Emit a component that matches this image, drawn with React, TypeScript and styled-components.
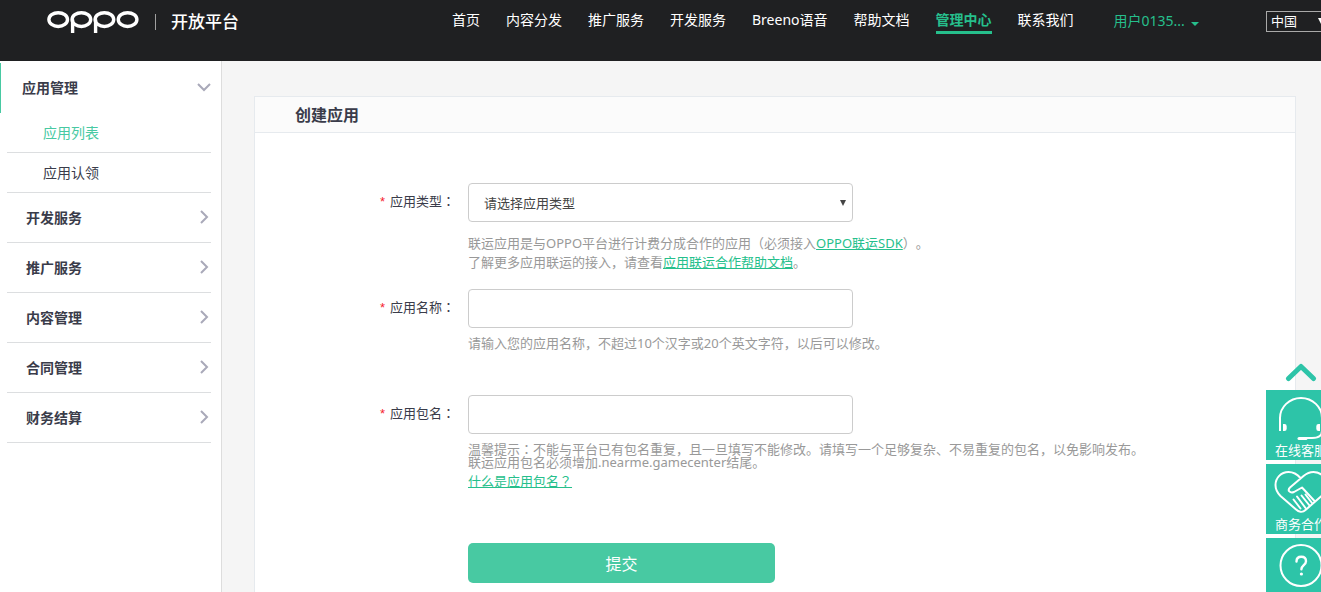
import React, { useState } from "react";
import styled, { createGlobalStyle, css } from "styled-components";

const color = {
  header: "#1f2022",
  accent: "#26bf8c",
  brand: "#48c9a2",
  widget: "#2dc4a8",
  ink: "#3a3c4a",
  muted: "#999999",
  rule: "#dcdee0",
  frame: "#e6eaee",
};

const GlobalStyle = createGlobalStyle`
  *, *::before, *::after { box-sizing: border-box; }
  body {
    margin: 0;
    font-family: "Noto Sans", "Noto Sans CJK SC", sans-serif;
    font-size: 13px;
    color: ${color.ink};
    background: #f5f5f5;
    text-spacing-trim: space-all;
  }
  a { color: inherit; text-decoration: none; }
  button, input, select { font: inherit; color: inherit; margin: 0; }
`;

const Shell = styled.div`
  overflow: hidden;
`;

const Page = styled.div`
  position: relative;
  display: flex;
  flex-direction: column;
  min-width: 1336px;
  min-height: 100vh;
`;

/* Full-width punctuation drawn in the middle of its cell */
const Mark = styled.span`
  font-family: "Noto Sans CJK JP", sans-serif;
  line-height: 0;
`;

/* ---------- header ---------- */

const Header = styled.header`
  display: flex;
  align-items: flex-start;
  height: 61px;
  padding: 0 8px 0 47px;
  background: ${color.header};
  color: #fff;
`;

const Brand = styled.a`
  display: flex;
  align-items: center;
  flex: none;
  width: 405px;
  height: 44px;
`;

const LogoMark = styled.svg`
  display: block;
  width: 92px;
  height: 24px;
`;

const BrandDivider = styled.span`
  width: 1px;
  height: 16px;
  margin: 0 15px 0 16px;
  background: #a0a0a0;
`;

const BrandName = styled.span`
  font-size: 17px;
  font-weight: 500;
  line-height: 24px;
`;

const Nav = styled.nav`
  display: flex;
  gap: 26px;
  padding-top: 9px;
`;

const NavLink = styled.a<{ $active?: boolean }>`
  border-bottom: 3px solid transparent;
  font-size: 14px;
  line-height: 22px;
  white-space: nowrap;
  ${(p) =>
    p.$active &&
    css`
      color: ${color.accent};
      border-color: ${color.accent};
      font-weight: 700;
    `}
`;

const UserMenu = styled.button`
  display: flex;
  align-items: center;
  gap: 6px;
  margin: 9px 0 0 40px;
  padding: 0;
  border: 0;
  background: none;
  color: ${color.accent};
  font-size: 14px;
  line-height: 24px;
  white-space: nowrap;
`;

const Caret = styled.span`
  margin-top: 5px;
  border: 4px solid transparent;
  border-top-color: currentColor;
  border-bottom: 0;
`;

const CountryBox = styled.div`
  display: grid;
  align-items: center;
  flex: none;
  width: 62px;
  height: 21px;
  margin: 11px 0 0 auto;
`;

const CountrySelect = styled.select`
  grid-area: 1 / 1;
  width: 100%;
  height: 21px;
  padding: 0 4px;
  border: 1px solid #a9a9a9;
  border-radius: 0;
  background: ${color.header};
  color: #fff;
  line-height: 19px;
  appearance: none;
`;

const DownMark = styled.span<{ $inset: number; $size: number }>`
  grid-area: 1 / 1;
  justify-self: end;
  margin-right: ${(p) => p.$inset}px;
  border: ${(p) => p.$size}px solid transparent;
  border-top: ${(p) => p.$size * 2}px solid currentColor;
  border-bottom: 0;
  pointer-events: none;
`;

/* ---------- sidebar ---------- */

const Body = styled.div`
  display: flex;
  flex: 1;
`;

const Sidebar = styled.aside`
  flex: none;
  width: 222px;
  padding-top: 2px;
  border-right: 1px solid #dddddd;
  background: #fff;
`;

const Group = styled.a<{ $open?: boolean }>`
  display: flex;
  align-items: center;
  justify-content: space-between;
  height: 50px;
  font-size: 14px;
  font-weight: 700;
  ${(p) =>
    p.$open
      ? css`
          padding: 0 10px 2px 21px;
          border-left: 1px solid ${color.brand};
        `
      : css`
          margin: 0 10px 0 7px;
          padding: 0 0 2px 19px;
          border-bottom: 1px solid ${color.rule};
        `}
`;

const SubItem = styled.a<{ $active?: boolean }>`
  display: block;
  height: 40px;
  margin: 0 10px 0 7px;
  padding-left: 36px;
  border-bottom: 1px solid ${color.rule};
  color: ${(p) => (p.$active ? color.brand : color.ink)};
  font-size: 14px;
  line-height: 39px;
`;

const Chevron = styled.svg`
  width: 14px;
  height: 14px;
  fill: none;
  stroke: #a9a9b9;
  stroke-width: 2;
`;

/* ---------- form card ---------- */

const Main = styled.main`
  display: flex;
  flex: 1;
  min-width: 0;
  padding: 35px 40px 0 32px;
  background: #f5f5f5;
`;

const Card = styled.section`
  flex: 1;
  min-width: 0;
  border: 1px solid ${color.frame};
  border-bottom: 0;
  background: #fff;
`;

const CardTitle = styled.h1`
  height: 36px;
  margin: 0;
  padding-left: 40px;
  border-bottom: 1px solid ${color.frame};
  background: #fbfbfb;
  font-size: 16px;
  font-weight: 700;
  line-height: 36px;
`;

const Form = styled.form`
  padding: 50px 0 9px;
`;

const Row = styled.div<{ $height: number }>`
  display: grid;
  grid-template-columns: 200px 1fr;
  column-gap: 13px;
  align-items: start;
  min-height: ${(p) => p.$height}px;
`;

const Label = styled.label`
  text-align: right;
  line-height: 36px;
`;

const Star = styled.span`
  margin-right: 5px;
  color: #f5222d;
  font-family: "Liberation Sans", sans-serif;
`;

const control = css`
  display: block;
  width: 385px;
  height: 39px;
  padding: 0 15px;
  border: 1px solid #cccccc;
  border-radius: 4px;
  background: #fff;
`;

const TextInput = styled.input`
  ${control}
`;

const SelectBox = styled.div`
  display: grid;
  align-items: center;
  width: 385px;
  color: #444;
`;

const Select = styled.select`
  ${control}
  grid-area: 1 / 1;
  appearance: none;
`;

const Hint = styled.p<{ $top: number; $line: number }>`
  margin: ${(p) => p.$top}px 0 0;
  color: ${color.muted};
  line-height: ${(p) => p.$line}px;
`;

const HintLink = styled.a`
  color: ${color.accent};
  text-decoration: underline;
`;

const Submit = styled.button`
  display: block;
  width: 307px;
  height: 40px;
  margin-left: 213px;
  padding: 0;
  border: 0;
  border-radius: 5px;
  background: ${color.brand};
  color: #fff;
  font-size: 16px;
`;

/* ---------- floating help ---------- */

const Floating = styled.div`
  position: absolute;
  top: 361px;
  right: 0;
  display: flex;
  flex-direction: column;
  gap: 4px;
  width: 70px;
`;

const ToTop = styled.button`
  display: flex;
  justify-content: center;
  height: 25px;
  padding: 0;
  border: 0;
  background: none;
`;

const Widget = styled.a`
  display: flex;
  flex-direction: column;
  align-items: center;
  height: 70px;
  background: ${color.widget};
  color: #fff;
  line-height: 20px;
`;

const WidgetIcon = styled.svg`
  flex: none;
  width: 70px;
  height: 50px;
  fill: none;
  stroke: #fff;
  stroke-width: 2;
  stroke-linecap: round;
  stroke-linejoin: round;
`;

const navItems = ["首页", "内容分发", "推广服务", "开发服务", "Breeno语音", "帮助文档", "管理中心", "联系我们"];
const groups = ["开发服务", "推广服务", "内容管理", "合同管理", "财务结算"];

function Logo() {
  return (
    <LogoMark viewBox="0 0 92 24" role="img" aria-label="OPPO">
      <g fill="none" stroke="#fff" strokeWidth="3.4">
        <ellipse cx="11.2" cy="9.6" rx="9.3" ry="6.9" />
        <ellipse cx="34.4" cy="9.6" rx="9.3" ry="6.9" />
        <ellipse cx="57.4" cy="9.6" rx="9.3" ry="6.9" />
        <ellipse cx="80.6" cy="9.6" rx="9.3" ry="6.9" />
        <path d="M25.6 9.6V23M48.6 9.6V23" />
      </g>
    </LogoMark>
  );
}

function HeadsetIcon() {
  return (
    <WidgetIcon viewBox="0 0 70 50" aria-hidden="true">
      <path strokeLinecap="butt" d="M14 41V28a21 20 0 0 1 42 0v13" />
      <path d="M56 41c0 5-4 7-10 7h-6" />
      <path strokeWidth="3" d="M33 48.4h7" />
      <path fill="#fff" stroke="none" d="M17 34h1.500a2.200 2.200 0 0 1 2.200 2.200v2.600a2.200 2.200 0 0 1-2.200 2.200H17zM54 34h-1.500a2.200 2.200 0 0 0-2.200 2.200v2.600a2.200 2.200 0 0 0 2.200 2.200H54z" />
    </WidgetIcon>
  );
}

function PartnerIcon() {
  return (
    <WidgetIcon viewBox="0 0 70 50" aria-hidden="true">
      <path d="M34.500 14C31 10 27 8 22.500 8C15 8 9.500 14 9.500 21c0 5 2 8 5 11l15 13c3 3 7 4 10 1l16-14c3-3 5-6 5-11C60.500 14 55 8 47.500 8c-4 0-7 1.500-10 4L24 23.500c-3 3 0 6 4 4.500l8-4.500 12.500 13.500" />
      <path d="M27.500 35.500l7 9M31 32.500l8.500 11.500M35.500 31.500l8 10M39.500 30.500l6.500 8.500" />
    </WidgetIcon>
  );
}

function QuestionIcon() {
  return (
    <WidgetIcon viewBox="0 0 70 50" aria-hidden="true">
      <circle cx="35" cy="27.500" r="20.500" />
      <path strokeWidth="2.400" d="M30.500 23.500c0-3 2-4.700 4.800-4.700s4.700 1.700 4.700 4.400c0 3.800-4.600 4-4.600 8" />
      <circle cx="35.400" cy="36" r="1.600" fill="#fff" stroke="none" />
    </WidgetIcon>
  );
}

function Required({ htmlFor, children }: { htmlFor: string; children: React.ReactNode }) {
  return (
    <Label htmlFor={htmlFor}>
      <Star>*</Star>
      {children}
      <Mark>：</Mark>
    </Label>
  );
}

export default function App() {
  const [name, setName] = useState("");
  const [pkg, setPkg] = useState("");

  return (
    <Shell>
      <GlobalStyle />
      <Page>
        <Header>
          <Brand href="#">
            <Logo />
            <BrandDivider />
            <BrandName>开放平台</BrandName>
          </Brand>
          <Nav>
            {navItems.map((item) => (
              <NavLink key={item} href="#" $active={item === "管理中心"}>
                {item}
              </NavLink>
            ))}
          </Nav>
          <UserMenu type="button">
            用户0135...
            <Caret />
          </UserMenu>
          <CountryBox>
            <CountrySelect aria-label="国家">
              <option>中国</option>
            </CountrySelect>
            <DownMark $inset={2} $size={4} />
          </CountryBox>
        </Header>

        <Body>
          <Sidebar>
            <Group href="#" $open>
              应用管理
              <Chevron viewBox="0 0 14 14">
                <path d="M1 4l6 6 6-6" />
              </Chevron>
            </Group>
            <SubItem href="#" $active>
              应用列表
            </SubItem>
            <SubItem href="#">应用认领</SubItem>
            {groups.map((g) => (
              <Group key={g} href="#">
                {g}
                <Chevron viewBox="0 0 14 14">
                  <path d="M4 1l6 6-6 6" />
                </Chevron>
              </Group>
            ))}
          </Sidebar>

          <Main>
            <Card>
              <CardTitle>创建应用</CardTitle>
              <Form onSubmit={(e) => e.preventDefault()}>
                <Row $height={106}>
                  <Required htmlFor="app-type">应用类型</Required>
                  <div>
                    <SelectBox>
                      <Select id="app-type">
                        <option>请选择应用类型</option>
                      </Select>
                      <DownMark $inset={7} $size={3} />
                    </SelectBox>
                    <Hint $top={12} $line={19}>
                      联运应用是与OPPO平台进行计费分成合作的应用（必须接入<HintLink href="#">OPPO联运SDK</HintLink>）。
                      <br />
                      了解更多应用联运的接入，请查看<HintLink href="#">应用联运合作帮助文档</HintLink>。
                    </Hint>
                  </div>
                </Row>
                <Row $height={106}>
                  <Required htmlFor="app-name">应用名称</Required>
                  <div>
                    <TextInput id="app-name" value={name} onChange={(e) => setName(e.target.value)} />
                    <Hint $top={6} $line={19}>
                      请输入您的应用名称，不超过10个汉字或20个英文字符，以后可以修改。
                    </Hint>
                  </div>
                </Row>
                <Row $height={148}>
                  <Required htmlFor="app-package">应用包名</Required>
                  <div>
                    <TextInput id="app-package" value={pkg} onChange={(e) => setPkg(e.target.value)} />
                    <Hint $top={9} $line={13}>
                      温馨提示<Mark>：</Mark>不能与平台已有包名重复，且一旦填写不能修改。请填写一个足够复杂、不易重复的包名，以免影响发布。
                      <br />
                      联运应用包名必须增加.nearme.gamecenter结尾。
                    </Hint>
                    <Hint $top={3} $line={19}>
                      <HintLink href="#">
                        什么是应用包名<Mark>？</Mark>
                      </HintLink>
                    </Hint>
                  </div>
                </Row>
                <Submit type="submit">提交</Submit>
              </Form>
            </Card>
          </Main>
        </Body>

        <Floating>
          <ToTop type="button" aria-label="返回顶部">
            <svg width="32" height="22" viewBox="0 0 32 22" fill="none" stroke={color.widget} strokeWidth="5" strokeLinecap="round" strokeLinejoin="round">
              <path d="M3.500 17.500L16 5.500l12.500 12" />
            </svg>
          </ToTop>
          <Widget href="#">
            <HeadsetIcon />
            在线客服
          </Widget>
          <Widget href="#">
            <PartnerIcon />
            商务合作
          </Widget>
          <Widget href="#" aria-label="帮助">
            <QuestionIcon />
          </Widget>
        </Floating>
      </Page>
    </Shell>
  );
}
